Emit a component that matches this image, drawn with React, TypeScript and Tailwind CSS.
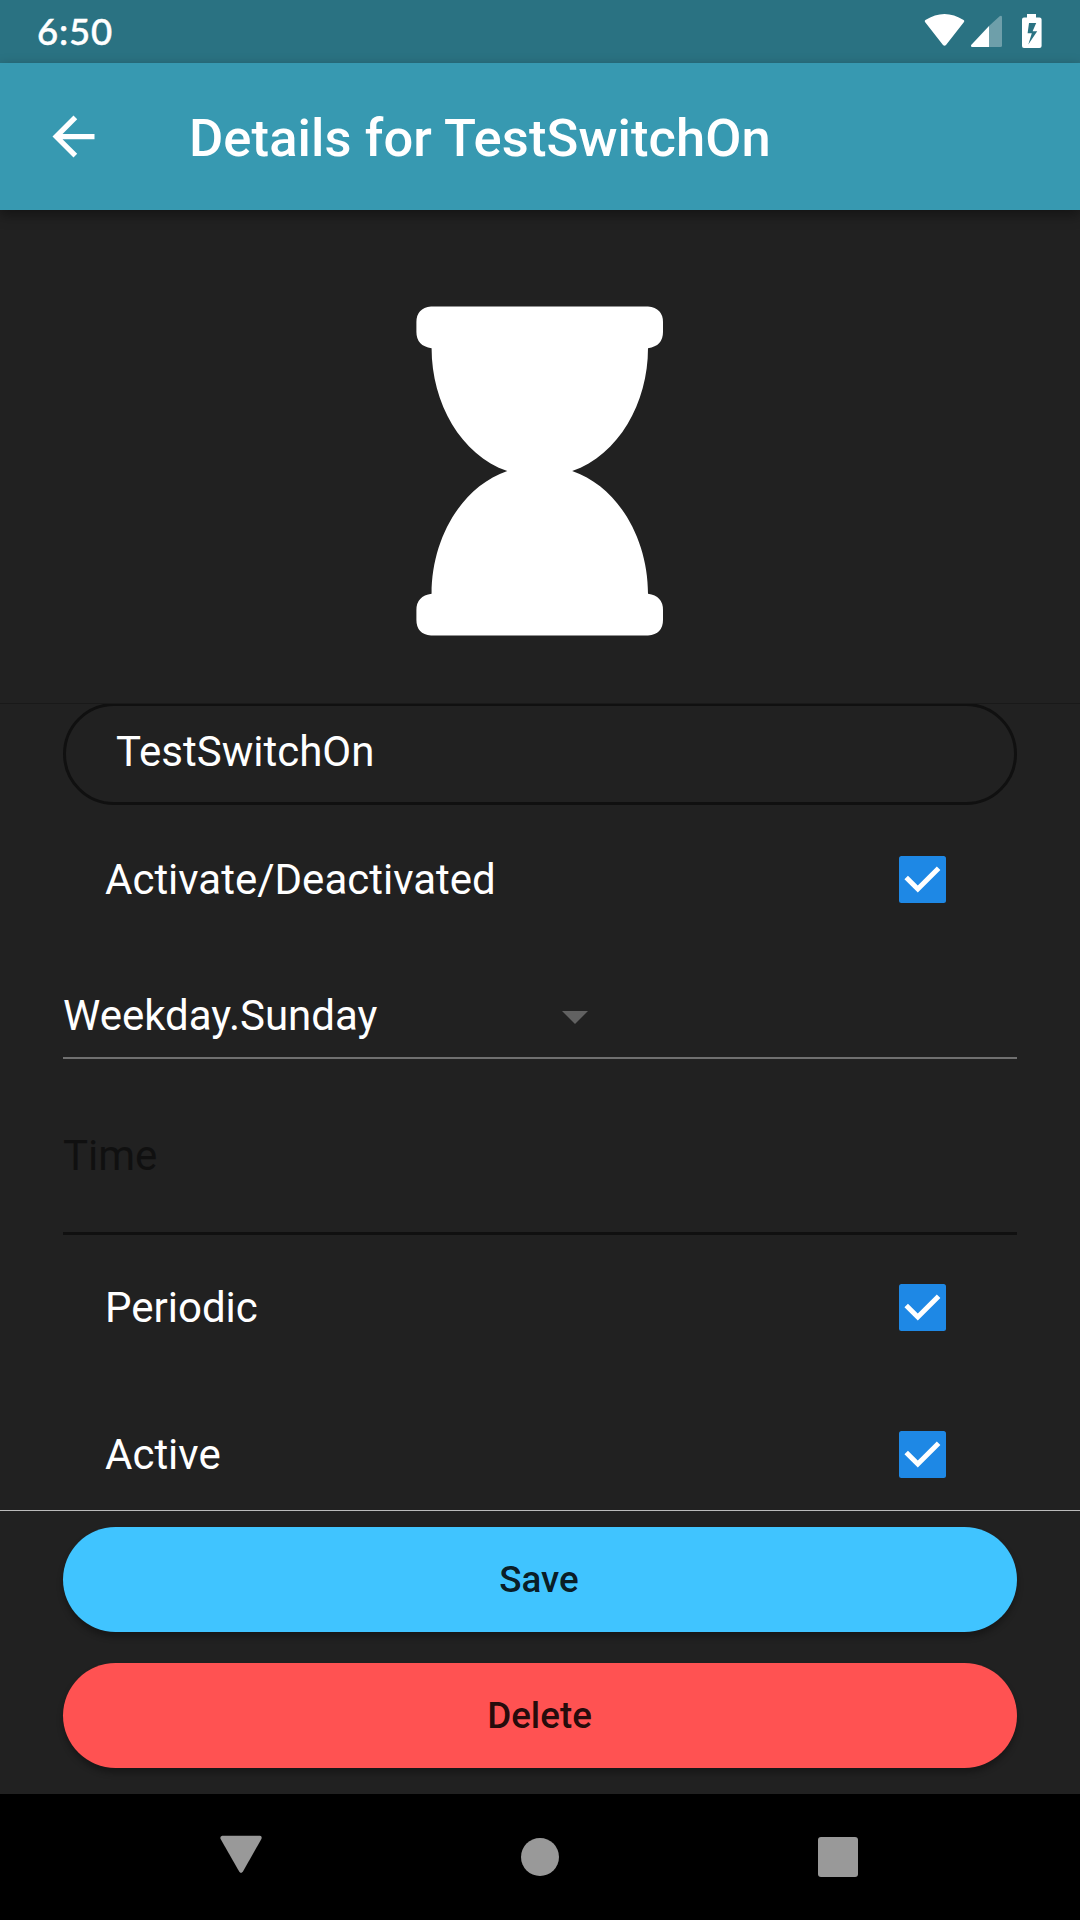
import React from "react";

function StatusBar() {
  return (
    <header className="flex h-[63px] shrink-0 items-center justify-between bg-[#2a7282] pr-[36px] pl-[37px] text-white">
      <span className="pb-[2px] font-[Lato,sans-serif] text-[36.5px] leading-[44px] font-medium tracking-[0.8px] [-webkit-text-stroke:0.5px_white]">6:50</span>
      <svg width="122" height="63" viewBox="922 0 122 63" fill="currentColor">
        <path d="M925.2 22.3Q924 21 925.4 20Q944.5 8 963.6 20Q965 21 963.8 22.3L946 45Q944.5 46.4 943 45Z" />
        <path d="M989 26V47H972.2Q970.2 46.4 971.4 44.7Z" />
        <path d="M989 26L999.6 16.2Q1001.8 15 1002 17.2V45.5Q1002 47 1000.5 47H989Z" opacity=".32" />
        <path fillRule="evenodd" d="M1027 14H1036V17.4H1039.5Q1041.6 17.4 1041.6 19.5V46Q1041.6 48 1039.5 48H1024Q1022 48 1022 46V19.5Q1022 17.4 1024 17.4H1027ZM1029 23L1027.6 33.2H1031.8L1028.3 44.4L1037.2 31.2H1032.6L1036.2 23Z" />
      </svg>
    </header>
  );
}

function AppBar() {
  return (
    <div className="z-10 flex h-[147px] shrink-0 items-center bg-[#3799b1] pl-[42px] text-white shadow-[0_5px_12px_rgba(0,0,0,0.4)]">
      <svg className="mr-[84px]" width="63" height="63" viewBox="0 0 24 24" fill="currentColor">
        <path d="M20 11H7.83l5.59-5.59L12 4l-8 8 8 8 1.41-1.41L7.83 13H20v-2z" />
      </svg>
      <h1 className="pt-[2px] text-[52.5px] leading-[60px] font-medium tracking-[0.1px]">Details for TestSwitchOn</h1>
    </div>
  );
}

function Hourglass() {
  return (
    <svg className="mt-[96px]" width="248" height="330" viewBox="0 0 248 330" fill="#fff">
      <path d="M15 .4H232Q247 2 247 16V26Q247 40 232 42.2C232 97 202.5 149 156.2 165C202.5 181 232 233 232 287.8Q247 290 247 304V314Q247 328 232 329.6H15Q.4 328 .4 314V304Q.4 290 15.6 287.8C15.6 233 45 181 91.3 165C45 149 15.6 97 15.6 42.2Q.4 40 .4 26V16Q.4 2 15 .4Z" />
    </svg>
  );
}

function CheckRow({ label }: { label: string }) {
  return (
    <label className="flex h-[147px] shrink-0 items-center justify-between pr-[134px] pl-[105px]">
      <span>{label}</span>
      <svg width="47" height="47" viewBox="0 0 47 47">
        <rect width="47" height="47" rx="2.5" fill="#1e88e5" />
        <path d="M7.2 21.5L18.8 33L39.6 12.2" fill="none" stroke="#fff" strokeWidth="5" />
      </svg>
    </label>
  );
}

function ActionButton({ label, className }: { label: string; className: string }) {
  return (
    <button
      className={
        "h-[105px] w-full shrink-0 rounded-full pt-[2px] text-[36.75px] leading-[44px] font-medium text-black/87 shadow-[0_5px_6px_rgba(0,0,0,0.3)] " +
        className
      }
    >
      {label}
    </button>
  );
}

function NavBar() {
  return (
    <nav className="flex h-[126px] shrink-0 items-center justify-between bg-black pr-[222px] pl-[220px] text-[#999]">
      <svg className="-mt-[4px]" width="42" height="40" viewBox="0 0 42 40" fill="currentColor">
        <path d="M2.2 .8H40Q42.4 1.2 41.4 4L22.8 36.8Q21 39 19.3 36.8L.6 4Q-.4 1.4 2.2 .8Z" />
      </svg>
      <span className="size-[38.5px] rounded-full bg-[#999]" />
      <span className="size-[40px] rounded-[3px] bg-[#999]" />
    </nav>
  );
}

export default function App() {
  return (
    <div className="flex h-[1920px] w-[1080px] flex-col overflow-hidden bg-[#212121] font-[Roboto,sans-serif] text-[42px] leading-[50px] text-white">
      <StatusBar />
      <AppBar />
      <section className="flex h-[493px] shrink-0 justify-center">
        <Hourglass />
      </section>
      <main className="flex h-[807px] shrink-0 flex-col overflow-hidden border-t border-[#191919]">
        <div className="mx-[63px] -mt-px mb-px flex h-[102px] shrink-0 items-center rounded-full border-3 border-[#101010] pb-[4px] pl-[50px]">
          TestSwitchOn
        </div>
        <CheckRow label="Activate/Deactivated" />
        <div className="mx-[63px] flex h-[106px] shrink-0 items-center border-b-2 border-[#707070] pt-[21px]">
          <span className="w-[499px]">Weekday.Sunday</span>
          <svg className="mt-[4px]" width="26" height="13" viewBox="0 0 26 13" fill="#616161">
            <path d="M0 0H26L13 13Z" />
          </svg>
        </div>
        <div className="mx-[63px] -mb-px flex h-[176px] shrink-0 items-center border-b-3 border-[#101010] pt-[21px] text-[#101010]">
          Time
        </div>
        <CheckRow label="Periodic" />
        <CheckRow label="Active" />
      </main>
      <footer className="flex h-[284px] shrink-0 flex-col gap-[31px] border-t border-[#bcbcbc] px-[63px] pt-[15.5px]">
        <ActionButton label="Save" className="bg-[#40c4ff] pr-[2px]" />
        <ActionButton label="Delete" className="bg-[#ff5252] pr-px" />
      </footer>
      <NavBar />
    </div>
  );
}
